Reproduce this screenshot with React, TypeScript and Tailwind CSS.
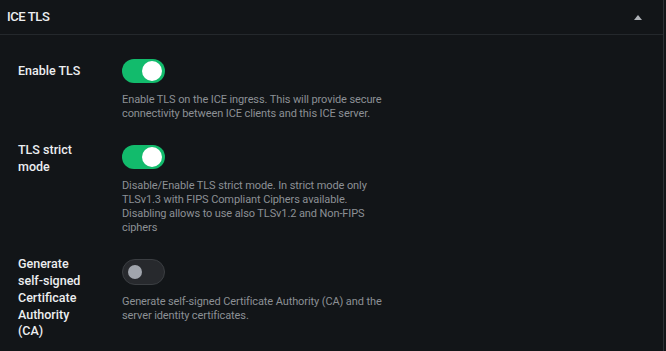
import React from "react";

type Row = {
  label: string;
  desc: string;
  on: boolean;
  labelOffset: string;
};

const rows: Row[] = [
  {
    label: "Enable TLS",
    desc: "Enable TLS on the ICE ingress. This will provide secure connectivity between ICE clients and this ICE server.",
    on: true,
    labelOffset: "mt-[4px]",
  },
  {
    label: "TLS strict mode",
    desc: "Disable/Enable TLS strict mode. In strict mode only TLSv1.3 with FIPS Compliant Ciphers available. Disabling allows to use also TLSv1.2 and Non-FIPS ciphers",
    on: true,
    labelOffset: "-mt-[3px]",
  },
  {
    label: "Generate self-signed Certificate Authority (CA)",
    desc: "Generate self-signed Certificate Authority (CA) and the server identity certificates.",
    on: false,
    labelOffset: "-mt-[3px]",
  },
];

function Toggle({ on }: { on: boolean }) {
  if (on) {
    return (
      <div className="flex h-[24px] w-[43px] items-center justify-end rounded-full bg-[#12bb6c] pr-[3px]">
        <div className="h-[20px] w-[20px] rounded-full bg-white" />
      </div>
    );
  }
  return (
    <div className="flex h-[26px] w-[43px] items-center rounded-full border-[1.5px] border-[#3b3e42] bg-[#27292d] pl-[5px]">
      <div className="h-[14px] w-[14px] rounded-full bg-[#a1a5ad]" />
    </div>
  );
}

export default function App() {
  return (
    <div className="h-[351px] w-[666px] overflow-hidden bg-[#121518] font-['Roboto',sans-serif]">
      <div className="h-full w-[664px] border-r border-[#2c3034]">
        <div className="flex h-[35px] items-center justify-between border-b border-[#24282c] pl-[7px] pr-[21px]">
          <span className="text-[13px] font-medium tracking-[-0.4px] text-[#eceef0]">ICE TLS</span>
          <svg width="8" height="5" viewBox="0 0 8 5" className="text-[#aeb2b7]">
            <path d="M4 0 L8 5 L0 5 Z" fill="currentColor" />
          </svg>
        </div>

        <div className="flex flex-col gap-[25px] pl-[18px] pt-[24px]">
          {rows.map((r) => (
            <div key={r.label} className="flex items-start">
              <div
                className={`w-[68px] shrink-0 text-[12.5px] font-medium leading-[16.8px] text-[#eceef0] ${r.labelOffset}`}
              >
                {r.label}
              </div>
              <div className="ml-[36px] flex flex-col">
                <Toggle on={r.on} />
                <p className="mt-[10px] w-[272px] text-[11px] leading-[13.7px] tracking-[-0.1px] text-[#8c9095]">
                  {r.desc}
                </p>
              </div>
            </div>
          ))}
        </div>
      </div>
    </div>
  );
}
